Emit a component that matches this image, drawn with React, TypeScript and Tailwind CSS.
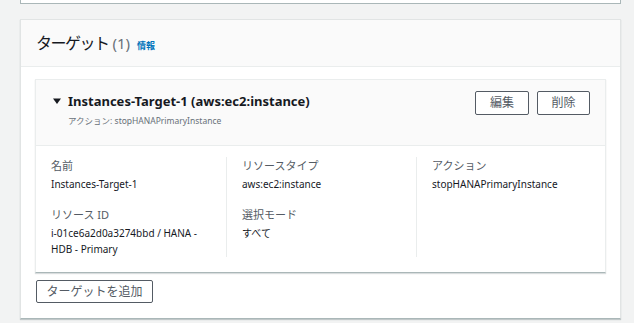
const font = { fontFamily: '"Noto Sans", "Noto Sans CJK JP", sans-serif' };

function Field({ label, value }: { label: string; value: string }) {
  return (
    <div>
      <p className="text-[11px] leading-[18px] text-[#545b64]">{label}</p>
      <p className="text-[10px] leading-[16px] text-[#16191f] mt-[1px]">{value}</p>
    </div>
  );
}

export default function App() {
  return (
    <div className="w-[634px] h-[323px] bg-[#f2f3f3] overflow-hidden" style={font}>
      {/* previous card (cut off) */}
      <div className="mx-[20px] w-[601px] h-[4px] bg-white border-b border-x border-[#aab7b8]" />

      {/* Targets card */}
      <div className="mt-[15px] mx-[20px] w-[601px] h-[300px] bg-white border border-[#e1e4e4] border-b-[#aab7b8] shadow-[0_1px_1px_rgba(0,28,36,0.2)]">
        <div className="h-[47px] bg-[#fafafa] border-b border-[#eaeded] flex items-center px-[15px]">
          <h2 className="text-[16px] tracking-[-1.5px] text-[#16191f] flex items-baseline">
            ターゲット
            <span className="ml-[4px] tracking-normal text-[#687078] text-[15px]">(1)</span>
            <span className="ml-[7px] tracking-normal text-[9px] font-bold text-[#0073bb]">情報</span>
          </h2>
        </div>

        <div className="px-[14px] pt-[12px]">
          <div className="border border-[#eaeded] border-b-[#aab7b8] shadow-[0_1px_1px_rgba(0,28,36,0.15)]">
            <div className="h-[66px] bg-[#fafafa] border-b border-[#eaeded] flex justify-between px-[15px] pt-[11px]">
              <div>
                <div className="flex items-center">
                  <svg width="10" height="10" viewBox="0 0 10 10" className="mr-[6px] ml-[1px]">
                    <path d="M1 2.5h8L5 8z" fill="#16191f" />
                  </svg>
                  <h3 className="text-[13px] font-bold text-[#16191f] leading-[20px]">
                    Instances-Target-1 (aws:ec2:instance)
                  </h3>
                </div>
                <p className="ml-[17px] mt-[4px] text-[8.5px] text-[#687078]">アクション: stopHANAPrimaryInstance</p>
              </div>
              <div className="flex gap-[8px] h-[24px]">
                <button className="w-[54px] h-[24px] border border-[#545b64] rounded-[2px] bg-white text-[12px] text-[#545b64]">編集</button>
                <button className="w-[53px] h-[24px] border border-[#545b64] rounded-[2px] bg-white text-[12px] text-[#545b64]">削除</button>
              </div>
            </div>

            <div className="grid grid-cols-[176px_190px_1fr] px-[15px] pt-[11px] pb-[15px]">
              <div className="flex flex-col gap-[14px] pr-[28px] border-r border-[#eaeded]">
                <Field label="名前" value="Instances-Target-1" />
                <Field label="リソース ID" value="i-01ce6a2d0a3274bbd / HANA - HDB - Primary" />
              </div>
              <div className="flex flex-col gap-[14px] px-[15px] border-r border-[#eaeded]">
                <Field label="リソースタイプ" value="aws:ec2:instance" />
                <Field label="選択モード" value="すべて" />
              </div>
              <div className="flex flex-col gap-[14px] px-[15px]">
                <Field label="アクション" value="stopHANAPrimaryInstance" />
              </div>
            </div>
          </div>

          <button className="mt-[7px] ml-[1px] w-[117px] h-[23px] border border-[#545b64] rounded-[2px] bg-white text-[12px] text-[#545b64]">
            ターゲットを追加
          </button>
        </div>
      </div>
    </div>
  );
}
